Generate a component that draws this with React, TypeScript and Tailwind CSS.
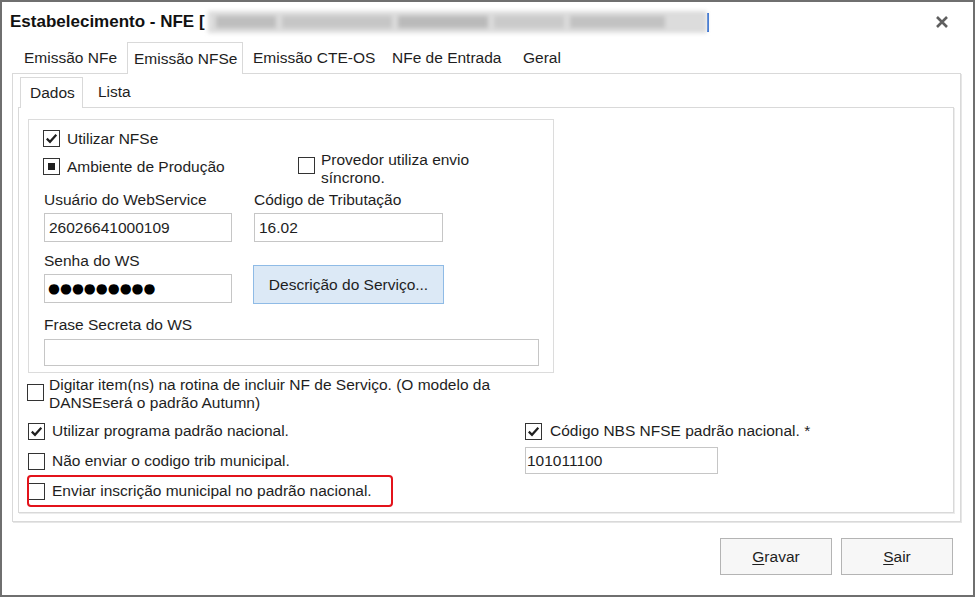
import React from 'react';

type CheckState = 'checked' | 'empty' | 'square';

const CheckBox = ({ state = 'empty' }: { state?: CheckState }) => (
  <span className="flex h-[17px] w-[17px] shrink-0 items-center justify-center border border-[#333333] bg-white">
    {state === 'checked' && (
      <svg width="13" height="13" viewBox="0 0 13 13">
        <path d="M1.8 6.6 L5 9.8 L11.3 2.8" fill="none" stroke="#1f1f1f" strokeWidth="2.2" />
      </svg>
    )}
    {state === 'square' && <span className="h-[7px] w-[7px] bg-[#1f1f1f]" />}
  </span>
);

const Field = ({ value, className }: { value?: string; className: string }) => (
  <div className={`flex items-center border border-[#c6c6c6] bg-white pl-[4px] ${className}`}>
    {value}
  </div>
);

const mainTabs = [
  { label: 'Emissão NFe', cls: 'w-[111px] pl-[8px]', active: false },
  { label: 'Emissão NFSe', cls: 'w-[116px] pl-[6px]', active: true },
  { label: 'Emissão CTE-OS', cls: 'w-[141px] pl-[10px]', active: false },
  { label: 'NFe de Entrada', cls: 'w-[131px] pl-[8px]', active: false },
  { label: 'Geral', cls: 'w-[60px] pl-[8px]', active: false },
];

const App = () => {
  return (
    <div className="h-[597px] w-[975px] overflow-hidden bg-white font-['Liberation_Sans',Arial,sans-serif] text-[15.5px] text-[#1e1e1e]">
      <div className="flex h-full w-full flex-col border-2 border-[#6f6f6f]">
        {/* title bar */}
        <div className="flex h-[40px] shrink-0 items-center pl-[8px] pr-[25px]">
          <span className="text-[17px] font-bold text-[#111]">Estabelecimento - NFE [</span>
          <div className="ml-[3px] flex h-[22px] w-[499px] items-center gap-[6px] bg-[#dcdcdc] px-[8px] blur-[2px]">
            <span className="h-[12px] w-[60px] bg-[#bebebe]" />
            <span className="h-[12px] w-[110px] bg-[#c6c6c6]" />
            <span className="h-[12px] w-[90px] bg-[#bababa]" />
            <span className="h-[12px] w-[70px] bg-[#cacaca]" />
            <span className="h-[12px] w-[95px] bg-[#c2c2c2]" />
          </div>
          <span className="h-[19px] w-[2px] bg-[#1a5fd0]" />
          <div className="flex-1" />
          <svg width="12" height="12" viewBox="0 0 12 12">
            <path d="M1 1 L11 11 M11 1 L1 11" stroke="#5f5f5f" strokeWidth="2.6" />
          </svg>
        </div>

        {/* main tabs */}
        <div className="ml-[14px] flex h-[31px] shrink-0 items-end">
          {mainTabs.map((t) =>
            t.active ? (
              <div
                key={t.label}
                className={`relative z-10 -mb-px flex h-[32px] items-center border border-b-0 border-[#d9d9d9] bg-white ${t.cls}`}
              >
                {t.label}
              </div>
            ) : (
              <div key={t.label} className={`flex h-[31px] items-center ${t.cls}`}>
                {t.label}
              </div>
            )
          )}
        </div>

        {/* outer tab panel */}
        <div className="ml-[10px] mr-[12px] flex h-[449px] shrink-0 flex-col border border-[#d9d9d9] pb-[8px] pl-[5px] pr-[6px] pt-[3px] shadow-[1px_1px_0_#e6e6e6]">
          {/* inner tabs */}
          <div className="ml-[2px] flex h-[30px] shrink-0 items-end">
            <div className="relative z-10 -mb-px flex h-[31px] w-[63px] items-center border border-b-0 border-[#d9d9d9] bg-white pl-[9px]">
              Dados
            </div>
            <div className="flex h-[30px] w-[56px] items-center pl-[15px]">Lista</div>
          </div>

          {/* inner panel */}
          <div className="flex flex-1 flex-col border border-[#d9d9d9] shadow-[1px_1px_0_#ececec]">
            {/* group box */}
            <div className="ml-[9px] mt-[11px] h-[254px] w-[526px] border border-[#dcdcdc]">
              <div className="flex flex-col pl-[14px] pt-[10px]">
                <div className="flex h-[17px] items-center gap-[7px]">
                  <CheckBox state="checked" />
                  <span>Utilizar NFSe</span>
                </div>

                <div className="mt-[11px] flex h-[17px] items-start">
                  <div className="flex w-[255px] items-center gap-[7px]">
                    <CheckBox state="square" />
                    <span className="leading-[17px]">Ambiente de Produção</span>
                  </div>
                  <div className="-mt-px flex items-start gap-[6px]">
                    <CheckBox />
                    <span className="-mt-[6px] w-[170px] leading-[18px]">Provedor utiliza envio síncrono.</span>
                  </div>
                </div>

                <div className="mt-[16px] flex h-[18px] items-center leading-[18px]">
                  <span className="w-[211px] pl-[1px]">Usuário do WebService</span>
                  <span>Código de Tributação</span>
                </div>

                <div className="mt-[4px] flex">
                  <div className="w-[211px] pl-[1px]">
                    <Field value="26026641000109" className="h-[29px] w-[188px]" />
                  </div>
                  <Field value="16.02" className="h-[29px] w-[189px]" />
                </div>

                <div className="mt-[10px] flex">
                  <div className="flex w-[210px] flex-col pl-[1px]">
                    <span className="h-[18px] leading-[18px]">Senha do WS</span>
                    <div className="mt-[4px] flex h-[29px] w-[188px] items-center border border-[#c6c6c6] bg-white pl-[3px] font-['DejaVu_Sans',sans-serif] text-[13.7px] leading-none text-black">
                      ●●●●●●●●●
                    </div>
                  </div>
                  <button className="mt-[13px] flex h-[39px] w-[191px] items-center justify-center border border-[#8fbbe6] bg-[#dce9f6] text-[#1e1e1e]">
                    Descrição do Serviço...
                  </button>
                </div>

                <span className="mt-[12px] h-[18px] pl-[1px] leading-[18px]">Frase Secreta do WS</span>
                <Field className="ml-[1px] mt-[5px] h-[27px] w-[495px]" />
              </div>
            </div>

            {/* options below group */}
            <div className="ml-[8px] mt-[3px] flex items-start gap-[5px]">
              <div className="mt-[8px]">
                <CheckBox />
              </div>
              <span className="w-[480px] leading-[18px]">
                Digitar item(ns) na rotina de incluir NF de Serviço. (O modelo da DANSEserá o padrão Autumn)
              </span>
            </div>

            <div className="ml-[9px] mt-[4px] flex">
              <div className="flex w-[497px] flex-col">
                <div className="flex h-[30px] items-center gap-[7px]">
                  <CheckBox state="checked" />
                  <span>Utilizar programa padrão nacional.</span>
                </div>
                <div className="flex h-[30px] items-center gap-[7px]">
                  <CheckBox />
                  <span>Não enviar o codigo trib municipal.</span>
                </div>
                <div className="relative flex h-[30px] items-center gap-[7px]">
                  <CheckBox />
                  <span>Enviar inscrição municipal no padrão nacional.</span>
                  <div className="absolute -left-[1px] -top-[1px] h-[32px] w-[366px] rounded-[4px] border-2 border-[#e3131b]" />
                </div>
              </div>
              <div className="flex flex-col">
                <div className="flex h-[30px] items-center gap-[8px]">
                  <CheckBox state="checked" />
                  <span>Código NBS NFSE padrão nacional. *</span>
                </div>
                <div className="mt-[1px] flex h-[27px] w-[193px] items-center border border-[#c6c6c6] bg-white pl-[1px]">
                  101011100
                </div>
              </div>
            </div>
          </div>
        </div>

        {/* buttons */}
        <div className="mr-[20px] mt-[16px] flex justify-end gap-[9px]">
          <button className="flex h-[37px] w-[112px] items-center justify-center border border-[#b4b4b4] bg-[#f7f7f7]">
            <span><span className="underline underline-offset-2">G</span>ravar</span>
          </button>
          <button className="flex h-[37px] w-[112px] items-center justify-center border border-[#b4b4b4] bg-[#f7f7f7]">
            <span><span className="underline underline-offset-2">S</span>air</span>
          </button>
        </div>
      </div>
    </div>
  );
};

export default App;
